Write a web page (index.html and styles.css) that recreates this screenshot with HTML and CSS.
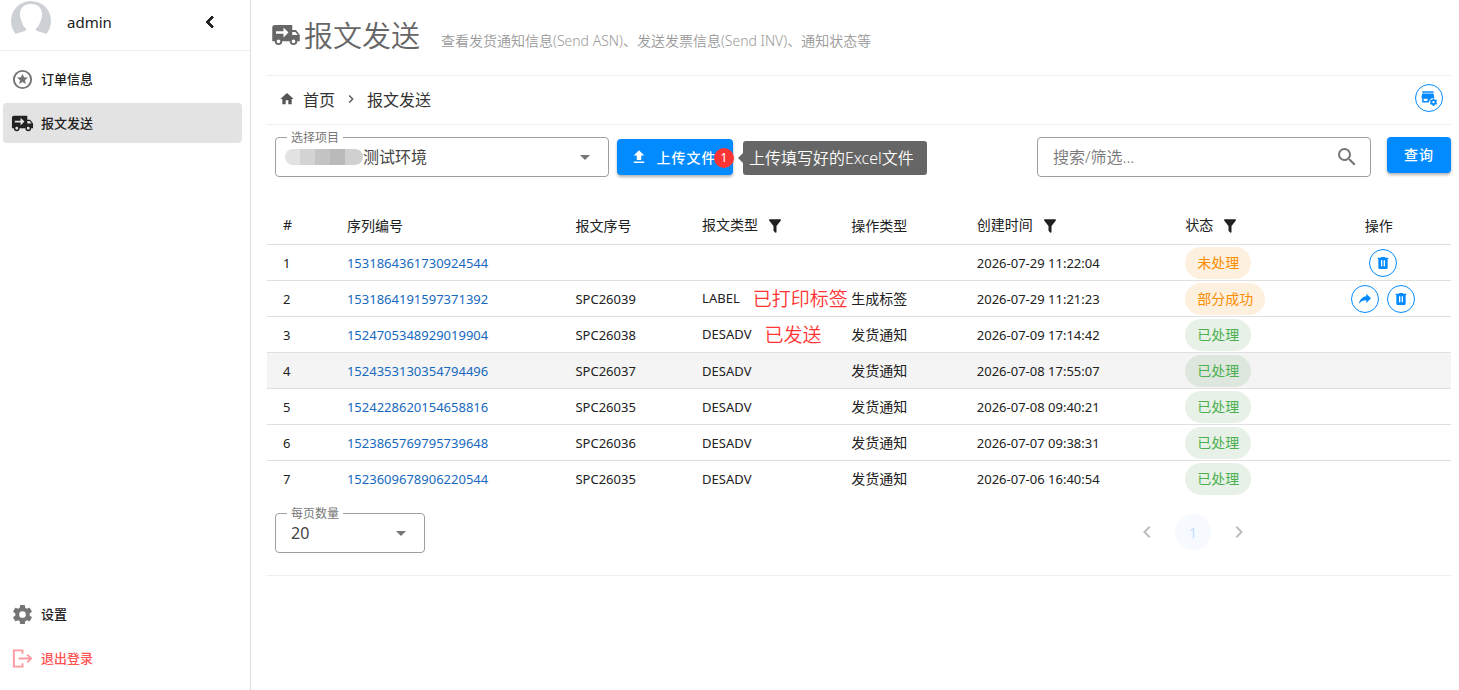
FILE: index.html
```html
<!DOCTYPE html>
<html lang="zh-CN">
<head>
    <meta charset="UTF-8">
    <meta name="viewport" content="width=device-width, initial-scale=1.0">
    <title>报文发送</title>
    <link rel="stylesheet" href="styles.css">
</head>
<body>
    <!-- Icon set -->
    <svg class="hidden" xmlns="http://www.w3.org/2000/svg">
        <symbol id="truck" viewBox="0 0 24 24"><path d="M3 4C1.9 4 1 4.9 1 6v11h2a3 3 0 0 0 6 0h6a3 3 0 0 0 6 0h2v-5l-3-4h-3V4H3m7 2l4 4-4 4v-3H4V9h6V6m7 3.5h2.5l1.96 2.5H17V9.5M6 15.5a1.5 1.5 0 1 1 0 3 1.5 1.5 0 0 1 0-3m12 0a1.5 1.5 0 1 1 0 3 1.5 1.5 0 0 1 0-3z"/></symbol>
        <symbol id="star" viewBox="0 0 24 24"><path fill-rule="evenodd" d="M12 2a10 10 0 1 0 0 20 10 10 0 0 0 0-20m0 2a8 8 0 1 1 0 16 8 8 0 0 1 0-16z"/><path d="M8.5 16.6l.9-3.9-3.1-2.7 4-.3L12 6l1.6 3.7 4 .3-3 2.7.9 3.9-3.5-2.1-3.5 2.1z"/></symbol>
        <symbol id="left" viewBox="0 0 24 24"><path d="M15.41 16.58L10.83 12l4.58-4.59L14 6l-6 6 6 6 1.41-1.42z"/></symbol>
        <symbol id="right" viewBox="0 0 24 24"><path d="M8.59 16.58L13.17 12 8.59 7.41 10 6l6 6-6 6-1.41-1.42z"/></symbol>
        <symbol id="home" viewBox="0 0 24 24"><path d="M10 20v-6h4v6h5v-8h3L12 3 2 12h3v8h5z"/></symbol>
        <symbol id="cog" viewBox="0 0 24 24"><path d="M12 15.5A3.5 3.5 0 0 1 8.5 12 3.5 3.5 0 0 1 12 8.5a3.5 3.5 0 0 1 3.5 3.5 3.5 3.5 0 0 1-3.5 3.5m7.43-2.53c.04-.32.07-.64.07-.97s-.03-.66-.07-1l2.11-1.63c.19-.15.24-.42.12-.64l-2-3.46c-.12-.22-.39-.31-.61-.22l-2.49 1c-.52-.39-1.06-.73-1.69-.98l-.37-2.65A.506.506 0 0 0 14 2h-4c-.25 0-.46.18-.5.42l-.37 2.65c-.63.25-1.17.59-1.69.98l-2.49-1c-.22-.09-.49 0-.61.22l-2 3.46c-.13.22-.07.49.12.64L4.57 11c-.04.34-.07.67-.07 1s.03.65.07.97l-2.11 1.66c-.19.15-.25.42-.12.64l2 3.46c.12.22.39.3.61.22l2.49-1.01c.52.4 1.06.74 1.69.99l.37 2.65c.04.24.25.42.5.42h4c.25 0 .46-.18.5-.42l.37-2.65c.63-.26 1.17-.59 1.69-.99l2.49 1.01c.22.08.49 0 .61-.22l2-3.46c.12-.22.07-.49-.12-.64l-2.11-1.66z"/></symbol>
        <symbol id="logout" viewBox="0 0 24 24"><path fill="none" stroke="currentColor" stroke-width="2" d="M12 7V3.500H3v17h9V17M8 12h13M17 8l4 4-4 4"/></symbol>
        <symbol id="upload" viewBox="0 0 24 24"><path d="M9 16v-6H5l7-7 7 7h-4v6H9m-4 4v-2h14v2H5z"/></symbol>
        <symbol id="search" viewBox="0 0 24 24"><path d="M9.5 3A6.5 6.5 0 0 1 16 9.5c0 1.61-.59 3.09-1.56 4.23l.27.27h.79l5 5-1.5 1.5-5-5v-.79l-.27-.27A6.516 6.516 0 0 1 9.5 16a6.5 6.5 0 0 1 0-13m0 2C7 5 5 7 5 9.5S7 14 9.5 14 14 12 14 9.5 12 5 9.5 5z"/></symbol>
        <symbol id="filter" viewBox="0 0 24 24"><path d="M14 12v7.88c.04.3-.06.62-.29.83a1 1 0 0 1-1.41 0l-2.01-2.01a.99.99 0 0 1-.29-.83V12h-.03L4.21 4.62a1 1 0 0 1 .17-1.4c.19-.14.4-.22.62-.22h14c.22 0 .43.08.62.22a1 1 0 0 1 .17 1.4L14.03 12H14z"/></symbol>
        <symbol id="trash" viewBox="0 0 24 24"><path d="M9 3v1H4v2h1v13a2 2 0 0 0 2 2h10a2 2 0 0 0 2-2V6h1V4h-5V3H9m0 5h2v9H9V8m4 0h2v9h-2V8z"/></symbol>
        <symbol id="share" viewBox="0 0 24 24"><path d="M21 11l-7-7v4C7 9 4 14 3 19c2.5-3.5 6-5.1 11-5.1V18l7-7z"/></symbol>
        <symbol id="down" viewBox="0 0 24 24"><path d="M7 10l5 5 5-5H7z"/></symbol>
        <symbol id="store" viewBox="0 0 24 24"><path d="M3 3h15v2H3zM3 6h15l1 5v1a6 6 0 0 0-7 6H3v-6H2v-1zM5 13v3h5v-3z" fill-rule="evenodd"/><path fill-rule="evenodd" d="M17 12.5h2l.4 1.5 1 .5 1.4-.4 1 1.8-1 1v1.2l1 1-1 1.8-1.400-.4-1 .5-.4 1.500h-2l-.4-1.500-1-.5-1.400.4-1-1.800 1-1v-1.200l-1-1 1-1.800 1.400.4 1-.5zM18 16a1.500 1.500 0 1 0 0 3 1.500 1.500 0 0 0 0-3z"/></symbol>
    </svg>

    <div class="app">
        <aside class="sidebar">
            <div class="user">
                <svg class="avatar" viewBox="0 0 40 40">
                    <circle cx="20" cy="20" r="20" fill="#cdd0d5"/>
                    <path fill="#fff" d="M20 3c-7 0-11 4-11 10 0 5 2 8 3 11 1 3 4 3 3 5-1 2-9 2-11 5v6h32v-6c-2-3-10-3-11-5-1-2 2-2 3-5 1-3 3-6 3-11 0-6-4-10-11-10z"/>
                </svg>
                <span class="user-name">admin</span>
                <button class="icon-btn collapse" aria-label="收起"><svg class="icon"><use href="#left"/></svg></button>
            </div>
            <nav class="menu">
                <a href="#"><svg class="icon"><use href="#star"/></svg><span>订单信息</span></a>
                <a href="#" class="active"><svg class="icon"><use href="#truck"/></svg><span>报文发送</span></a>
            </nav>
            <nav class="menu menu-bottom">
                <a href="#"><svg class="icon"><use href="#cog"/></svg><span>设置</span></a>
                <a href="#" class="logout"><svg class="icon"><use href="#logout"/></svg><span>退出登录</span></a>
            </nav>
        </aside>

        <main>
            <header class="page-header">
                <h1><svg class="icon"><use href="#truck"/></svg>报文发送</h1>
                <p>查看发货通知信息(Send ASN)、发送发票信息(Send INV)、通知状态等</p>
            </header>

            <div class="crumb-bar">
                <nav class="crumbs">
                    <svg class="icon"><use href="#home"/></svg>
                    <a href="#">首页</a>
                    <svg class="icon"><use href="#right"/></svg>
                    <a href="#">报文发送</a>
                </nav>
                <button class="round-btn" aria-label="项目设置"><svg class="icon"><use href="#store"/></svg></button>
            </div>

            <div class="toolbar">
                <div class="field project">
                    <label for="project">选择项目</label>
                    <select id="project"><option>测试环境</option></select>
                    <span class="mask"></span>
                    <svg class="icon"><use href="#down"/></svg>
                </div>
                <div class="upload">
                    <button class="btn"><svg class="icon"><use href="#upload"/></svg>上传文件</button>
                    <span class="badge">1</span>
                    <span class="tip">上传填写好的Excel文件</span>
                </div>
                <div class="field search">
                    <input type="text" placeholder="搜索/筛选..." aria-label="搜索/筛选">
                    <svg class="icon"><use href="#search"/></svg>
                </div>
                <button class="btn query">查询</button>
            </div>

            <table>
                <colgroup>
                    <col class="c-no"><col class="c-serial"><col class="c-msg"><col class="c-type">
                    <col class="c-op"><col class="c-time"><col class="c-status"><col class="c-action">
                </colgroup>
                <thead>
                    <tr>
                        <th>#</th>
                        <th>序列编号</th>
                        <th>报文序号</th>
                        <th>报文类型<button class="icon-btn" aria-label="筛选类型"><svg class="icon"><use href="#filter"/></svg></button></th>
                        <th>操作类型</th>
                        <th>创建时间<button class="icon-btn" aria-label="筛选时间"><svg class="icon"><use href="#filter"/></svg></button></th>
                        <th>状态<button class="icon-btn" aria-label="筛选状态"><svg class="icon"><use href="#filter"/></svg></button></th>
                        <th class="actions">操作</th>
                    </tr>
                </thead>
                <tbody>
                    <tr>
                        <td>1</td><td><a href="#">1531864361730924544</a></td><td></td><td></td><td class="zh"></td><td>2026-07-29 11:22:04</td>
                        <td><span class="chip orange">未处理</span></td>
                        <td class="actions"><button class="round-btn" aria-label="删除"><svg class="icon"><use href="#trash"/></svg></button></td>
                    </tr>
                    <tr>
                        <td>2</td><td><a href="#">1531864191597371392</a></td><td>SPC26039</td><td>LABEL<span class="note">已打印标签</span></td><td class="zh">生成标签</td><td>2026-07-29 11:21:23</td>
                        <td><span class="chip orange">部分成功</span></td>
                        <td class="actions"><button class="round-btn" aria-label="发送"><svg class="icon"><use href="#share"/></svg></button><button class="round-btn" aria-label="删除"><svg class="icon"><use href="#trash"/></svg></button></td>
                    </tr>
                    <tr>
                        <td>3</td><td><a href="#">1524705348929019904</a></td><td>SPC26038</td><td>DESADV<span class="note">已发送</span></td><td class="zh">发货通知</td><td>2026-07-09 17:14:42</td>
                        <td><span class="chip green">已处理</span></td><td></td>
                    </tr>
                    <tr class="hover">
                        <td>4</td><td><a href="#">1524353130354794496</a></td><td>SPC26037</td><td>DESADV</td><td class="zh">发货通知</td><td>2026-07-08 17:55:07</td>
                        <td><span class="chip green">已处理</span></td><td></td>
                    </tr>
                    <tr>
                        <td>5</td><td><a href="#">1524228620154658816</a></td><td>SPC26035</td><td>DESADV</td><td class="zh">发货通知</td><td>2026-07-08 09:40:21</td>
                        <td><span class="chip green">已处理</span></td><td></td>
                    </tr>
                    <tr>
                        <td>6</td><td><a href="#">1523865769795739648</a></td><td>SPC26036</td><td>DESADV</td><td class="zh">发货通知</td><td>2026-07-07 09:38:31</td>
                        <td><span class="chip green">已处理</span></td><td></td>
                    </tr>
                    <tr>
                        <td>7</td><td><a href="#">1523609678906220544</a></td><td>SPC26035</td><td>DESADV</td><td class="zh">发货通知</td><td>2026-07-06 16:40:54</td>
                        <td><span class="chip green">已处理</span></td><td></td>
                    </tr>
                </tbody>
            </table>

            <footer class="table-footer">
                <div class="field page-size">
                    <label for="pageSize">每页数量</label>
                    <select id="pageSize"><option>20</option></select>
                    <svg class="icon"><use href="#down"/></svg>
                </div>
                <div class="pager">
                    <button aria-label="上一页" disabled><svg class="icon"><use href="#left"/></svg></button>
                    <button class="current" disabled>1</button>
                    <button aria-label="下一页" disabled><svg class="icon"><use href="#right"/></svg></button>
                </div>
            </footer>
        </main>
    </div>
</body>
</html>
```
FILE: styles.css
```css
* { box-sizing: border-box; }
body {
    margin: 0;
    font-family: "Noto Sans", "Noto Sans CJK SC", sans-serif;
    font-size: 14px;
    color: #212121;
    background: #fff;
}
a { color: inherit; text-decoration: none; }
button, input, select { font: inherit; color: inherit; }
button { border: none; background: none; padding: 0; cursor: pointer; }
.hidden { display: none; }
.icon { width: 24px; height: 24px; fill: currentColor; flex: none; display: block; }
.app { display: flex; min-height: 100vh; }

/* Sidebar */
.sidebar {
    width: 251px;
    flex: none;
    border-right: 1px solid #ddd;
    display: flex;
    flex-direction: column;
}
.user {
    display: flex;
    align-items: center;
    height: 51px;
    padding: 0 28px 6px 11px;
    border-bottom: 1px solid #eee;
}
.avatar { width: 40px; height: 40px; margin-bottom: 2px; }
.user-name { margin-left: 16px; font-size: 15px; }
.collapse { margin-left: auto; }
.collapse .icon { stroke: currentColor; }
.menu { padding: 8px 8px 0 3px; display: flex; flex-direction: column; gap: 4px; }
.menu a {
    display: flex;
    align-items: center;
    gap: 7px;
    height: 40px;
    padding: 0 8px;
    border-radius: 4px;
    font-size: 13px;
    font-weight: 500;
}
.menu span { padding-bottom: 2px; }
.menu .icon { width: 23px; height: 23px; color: #757575; }
.menu .active { background: #e3e3e3; }
.menu .active .icon { color: #212121; }
.menu-bottom { margin-top: auto; padding-bottom: 12px; }
.menu .logout { color: #ff5252; }
.menu .logout .icon { color: #ff9aa0; }

/* Page head */
main { flex: 1; min-width: 0; padding: 0 8px 0 16px; }
.page-header {
    display: flex;
    align-items: flex-start;
    gap: 21px;
    height: 76px;
    padding: 13px 4px 0;
    border-bottom: 1px solid #eee;
}
h1 { display: flex; align-items: center; gap: 3px; margin: 0; font-size: 29px; font-weight: 350; color: #666; }
h1 .icon { width: 30px; height: 30px; margin-top: 2px; }
.page-header p { margin: 18px 0 0; font-weight: 350; line-height: 20px; color: #999; }
.crumb-bar {
    display: flex;
    justify-content: space-between;
    align-items: center;
    height: 49px;
    padding: 0 8px 4px 12px;
    border-bottom: 1px solid #eee;
}
.crumbs { display: flex; align-items: center; gap: 8px; font-size: 16px; padding-top: 2px; color: #333; }
.crumbs .icon { width: 16px; height: 16px; color: #555; }
.round-btn {
    display: inline-flex;
    align-items: center;
    justify-content: center;
    width: 28px;
    height: 28px;
    border: 1px solid #028bff;
    border-radius: 50%;
    color: #028bff;
    vertical-align: middle;
}
.round-btn .icon { width: 16px; height: 16px; }
.crumb-bar .round-btn .icon { width: 18px; height: 18px; }

/* Toolbar */
.toolbar { display: flex; align-items: flex-start; padding: 12px 0 0 8px; }
.field { position: relative; height: 40px; }
.field select, .field input {
    width: 100%;
    height: 40px;
    padding: 0 15px;
    border: 1px solid #9e9e9e;
    border-radius: 4px;
    background: #fff;
    font-size: 16px;
    color: #444;
    appearance: none;
    outline: none;
}
.field label {
    position: absolute;
    top: -7px;
    left: 12px;
    padding: 0 4px;
    background: #fff;
    font-size: 12px;
    line-height: 16px;
    color: #777;
}
.field .icon { position: absolute; top: 8px; right: 12px; color: #757575; pointer-events: none; }
.field input::placeholder { color: #777; font-weight: 350; opacity: 1; }
.project, .search { flex: 0 1 334px; }
.field.project select { padding-left: 87px; }
.mask {
    position: absolute;
    top: 12px;
    left: 10px;
    width: 78px;
    height: 16px;
    border-radius: 8px;
    background: linear-gradient(90deg, #e2e2e2 15px, #d3d3d3 15px 30px, #c4c4c4 30px 45px, #bababa 45px 60px, #d0d0d0 60px);
}
.upload { position: relative; margin: 2px auto 0 8px; }
.btn {
    display: flex;
    align-items: center;
    justify-content: center;
    gap: 9px;
    height: 36px;
    padding: 0 16px 0 12px;
    border-radius: 4px;
    background: #028bff;
    color: #fff;
    font-size: 14px;
    font-weight: 500;
    letter-spacing: 1px;
    box-shadow: 0 2px 3px rgba(0, 0, 0, .3);
}
.upload .btn { width: 116px; }
.btn .icon { width: 18px; height: 18px; }
.query { width: 64px; padding: 0 0 2px; margin-left: 16px; }
.badge {
    position: absolute;
    top: 9px;
    right: -1px;
    width: 20px;
    height: 20px;
    border-radius: 50%;
    background: #ff3535;
    color: #fff;
    font-size: 12px;
    line-height: 20px;
    text-align: center;
}
.tip {
    position: absolute;
    top: 2px;
    left: 126px;
    padding: 0 13px 0 6px;
    border-radius: 3px;
    background: #666;
    color: #fff;
    font-size: 16px;
    font-weight: 350;
    line-height: 34px;
    white-space: nowrap;
}
.tip::before {
    content: "";
    position: absolute;
    top: 12px;
    left: -5px;
    border: 5px solid transparent;
    border-left: none;
    border-right-color: #666;
}

/* Table */
table { width: 100%; margin-top: 30px; border-collapse: separate; border-spacing: 0; table-layout: fixed; }
.c-no { width: 5.4%; }
.c-serial { width: 19.3%; }
.c-msg { width: 10.7%; }
.c-type { width: 12.6%; }
.c-op { width: 10.6%; }
.c-time { width: 17.6%; }
.c-status { width: 11.6%; }
.c-action { width: 12.2%; }
th, td {
    height: 36px;
    padding: 0 0 0 16px;
    text-align: left;
    white-space: nowrap;
    border-bottom: 1px solid #e0e0e0;
}
th { height: 38px; padding-bottom: 2px; font-weight: 400; font-size: 14px; }
th .icon-btn { margin-left: 8px; vertical-align: middle; }
th .icon { width: 18px; height: 18px; }
td { font-size: 13px; line-height: 20px; }
td.zh { font-size: 14px; }
td a { color: #1769c0; }
tbody tr:last-child td { border-bottom: none; }
.hover td { background: #f4f4f4; }
.chip {
    display: inline-block;
    height: 32px;
    padding: 0 12px;
    border-radius: 16px;
    font-size: 14px;
    line-height: 32px;
    vertical-align: middle;
}
.orange { color: #fb8c00; background: rgba(251, 140, 0, .13); }
.green { color: #4caf50; background: rgba(56, 142, 60, .12); }
.actions { padding-left: 0; text-align: center; }
td.actions { padding-left: 8px; }
.actions .round-btn + .round-btn { margin-left: 8px; }
.note { margin-left: 13px; color: #ff3535; font-size: 19px; font-weight: 350; line-height: 20px; vertical-align: middle; }

/* Footer */
.table-footer {
    display: flex;
    justify-content: space-between;
    align-items: center;
    padding: 16px 200px 22px 8px;
    border-bottom: 1px solid #eee;
}
.page-size { width: 150px; }
.pager { display: flex; align-items: center; gap: 16px; padding-bottom: 2px; }
.pager button { color: #bdbdbd; }
.pager .current { width: 36px; height: 36px; border-radius: 50%; background: #f6faff; color: #bfe0ff; }
```
